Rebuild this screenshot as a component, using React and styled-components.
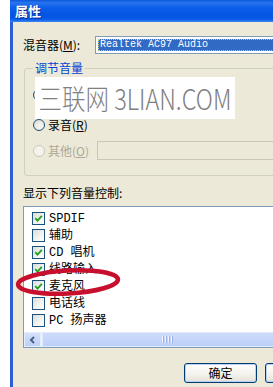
import React from "react";
import styled, { createGlobalStyle } from "styled-components";

const Global = createGlobalStyle`
  html, body { margin: 0; padding: 0; background: #fff; }
  body { font-family: "Noto Sans CJK SC", "Liberation Sans", sans-serif; }
`;

const Page = styled.div`
  position: relative;
  width: 273px;
  height: 387px;
  overflow: hidden;
  background: #fff;
  display: flex;
  padding-left: 10px;
  box-sizing: border-box;
`;

const Window = styled.div`
  flex: none;
  width: 360px;
  display: flex;
  flex-direction: column;
`;

const TitleBar = styled.div`
  flex: none;
  height: 22px;
  display: flex;
  align-items: center;
  padding-left: 5px;
  background: linear-gradient(180deg, #0a57d8 0%, #2a74ee 12%, #0b5ee9 35%, #0455e2 75%, #0a5ce8 88%, #3b86f2 100%);
  color: #fff;
  font-weight: 700;
  font-size: 13px;
  line-height: 16px;
  text-shadow: 1px 1px #0c2a8a;
`;

const Body = styled.div`
  flex: 1;
  background: #ece9d8;
  border-left: 3px solid #2c5fd6;
  padding-left: 10px;
  display: flex;
  flex-direction: column;
  font-size: 12px;
  line-height: 14px;
  color: #000;
`;

const MixerRow = styled.div`
  margin-top: 14px;
  height: 18px;
  display: flex;
  align-items: center;
`;

const FieldLabel = styled.span`
  width: 72px;
  flex: none;
  white-space: nowrap;
`;

const Combo = styled.div`
  width: 260px;
  height: 18px;
  box-sizing: border-box;
  border: 1px solid #7f9db9;
  background: #fff;
  padding: 2px 2px;
  display: flex;
`;

const ComboSelected = styled.div`
  flex: 1;
  background: #316ac5;
  border: 1px dotted #d8c86a;
  color: #fff;
  font-family: "Liberation Mono", monospace;
  font-size: 10px;
  line-height: 10px;
  padding-left: 1px;
  display: flex;
  align-items: center;
`;

const Group = styled.fieldset`
  margin: 7px 0 0 1px;
  border: 1px solid #d0d0bf;
  border-radius: 3px;
  padding: 0 0 15px 8px;
  min-width: 0;
  display: flex;
  flex-direction: column;
`;

const Legend = styled.legend`
  color: #0046d5;
  padding: 0 2px;
  font-size: 12px;
  line-height: 14px;
`;

const RadioRow = styled.div`
  margin-top: ${(p) => p.$gap}px;
  height: ${(p) => p.$h || 14}px;
  display: flex;
  align-items: center;
  color: ${(p) => (p.$disabled ? "#aca899" : "#000")};
`;

const Radio = styled.span`
  flex: none;
  width: 12px;
  height: 12px;
  box-sizing: border-box;
  border-radius: 50%;
  border: 1px solid ${(p) => (p.$disabled ? "#cac8bb" : "#1c5180")};
  background: ${(p) =>
    p.$disabled ? "#f4f3ee" : "radial-gradient(circle at 65% 65%, #f4f3ee 20%, #dcd9cc 100%)"};
  margin-right: 3px;
`;

const TextBox = styled.div`
  margin-left: 8px;
  width: 220px;
  height: 19px;
  box-sizing: border-box;
  border: 1px solid #c9c7ba;
  background: #ece9d8;
`;

const SectionLabel = styled.div`
  margin-top: 10px;
  height: 14px;
`;

const ListBox = styled.div`
  margin-top: 6px;
  width: 300px;
  height: 142px;
  box-sizing: border-box;
  border: 1px solid #7f9db9;
  background: #fff;
  display: flex;
  flex-direction: column;
`;

const Items = styled.div`
  padding: 3px 0 0 8px;
  display: flex;
  flex-direction: column;
`;

const Item = styled.div`
  height: 17px;
  display: flex;
  align-items: center;
  font-family: "Liberation Mono", "Noto Sans CJK SC", monospace;
  font-size: 12px;
`;

const Check = styled.span`
  flex: none;
  width: 13px;
  height: 13px;
  box-sizing: border-box;
  border: 1px solid #1c5180;
  background: linear-gradient(135deg, #dcdcd7 0%, #f4f4f1 60%, #ffffff 100%);
  margin-right: 4px;
  display: flex;
  align-items: center;
  justify-content: center;
`;

const Scrollbar = styled.div`
  margin-top: auto;
  height: 15px;
  display: flex;
  background: #f3f1ec;
`;

const ScrollButton = styled.div`
  flex: none;
  width: 17px;
  box-sizing: border-box;
  background: linear-gradient(180deg, #d4e1fc 0%, #bdd0f8 100%);
  border: 1px solid #e6eefc;
  display: flex;
  align-items: center;
  justify-content: center;
`;

const Thumb = styled.div`
  flex: none;
  width: 250px;
  margin-left: 1px;
  box-sizing: border-box;
  background: linear-gradient(180deg, #cfdcfb 0%, #bccff8 100%);
  border: 1px solid #e2eafc;
  border-right: none;
  display: flex;
  align-items: center;
  justify-content: center;
  gap: 1px;
`;

const Grip = styled.span`
  width: 1px;
  height: 7px;
  background: #eef3ff;
  box-shadow: 1px 0 #9bb3e6;
  margin-right: 1px;
`;

const ButtonRow = styled.div`
  margin-top: 15px;
  padding-left: 161px;
  display: flex;
  gap: 8px;
`;

const Button = styled.div`
  flex: none;
  width: 73px;
  height: 20px;
  box-sizing: border-box;
  border: 1px solid #003c74;
  border-radius: 3px;
  background: linear-gradient(180deg, #ffffff 0%, #f2f1ec 60%, #e3e0d6 100%);
  box-shadow: inset 0 0 0 1px #b9d1f4;
  display: flex;
  align-items: center;
  justify-content: center;
  font-size: 12px;
`;

const Watermark = styled.div`
  position: absolute;
  left: 35px;
  top: 77px;
  width: 200px;
  height: 42px;
  background: #fff;
  display: flex;
  align-items: center;
  justify-content: center;
  overflow: hidden;
`;

const WatermarkText = styled.span`
  font-family: "Noto Sans CJK SC", sans-serif;
  font-weight: 300;
  font-size: 28px;
  line-height: 30px;
  color: #808080;
  white-space: nowrap;
  transform: scaleX(0.84);
`;

const Mark = styled.svg`
  position: absolute;
  left: 14px;
  top: 265px;
`;

const CheckMark = () => (
  <svg width="9" height="9" viewBox="0 0 9 9">
    <path d="M1.2 4.2 L3.5 6.6 L7.8 1.8" fill="none" stroke="#21a121" strokeWidth="1.8" />
  </svg>
);

const items = [
  { t: "SPDIF", c: true },
  { t: "辅助", c: false },
  { t: "CD 唱机", c: true },
  { t: "线路输入", c: true },
  { t: "麦克风", c: true },
  { t: "电话线", c: false },
  { t: "PC 扬声器", c: false },
];

export default function App() {
  return (
    <>
      <Global />
      <Page>
        <Window>
          <TitleBar>属性</TitleBar>
          <Body>
            <MixerRow>
              <FieldLabel>
                混音器(<u>M</u>):
              </FieldLabel>
              <Combo>
                <ComboSelected>Realtek AC97 Audio</ComboSelected>
              </Combo>
            </MixerRow>
            <Group>
              <Legend>调节音量</Legend>
              <RadioRow $gap={13}>
                <Radio />
                播放(<u>P</u>)
              </RadioRow>
              <RadioRow $gap={16}>
                <Radio />
                录音(<u>R</u>)
              </RadioRow>
              <RadioRow $gap={9} $h={19} $disabled>
                <Radio $disabled />
                其他(<u>O</u>)
                <TextBox />
              </RadioRow>
            </Group>
            <SectionLabel>显示下列音量控制:</SectionLabel>
            <ListBox>
              <Items>
                {items.map((it) => (
                  <Item key={it.t}>
                    <Check>{it.c && <CheckMark />}</Check>
                    {it.t}
                  </Item>
                ))}
              </Items>
              <Scrollbar>
                <ScrollButton>
                  <svg width="7" height="8" viewBox="0 0 7 8">
                    <path d="M5 1 L2 4 L5 7" fill="none" stroke="#4d6185" strokeWidth="2" />
                  </svg>
                </ScrollButton>
                <Thumb>
                  <Grip />
                  <Grip />
                  <Grip />
                  <Grip />
                </Thumb>
              </Scrollbar>
            </ListBox>
            <ButtonRow>
              <Button>确定</Button>
              <Button>取消</Button>
            </ButtonRow>
          </Body>
        </Window>
        <Watermark>
          <WatermarkText>三联网 3LIAN.COM</WatermarkText>
        </Watermark>
        <Mark width="110" height="34" viewBox="0 0 110 34">
          <ellipse
            cx="54"
            cy="17"
            rx="50"
            ry="11.5"
            fill="none"
            stroke="#c8102e"
            strokeWidth="4.5"
            transform="rotate(-3 54 17)"
          />
        </Mark>
      </Page>
    </>
  );
}
